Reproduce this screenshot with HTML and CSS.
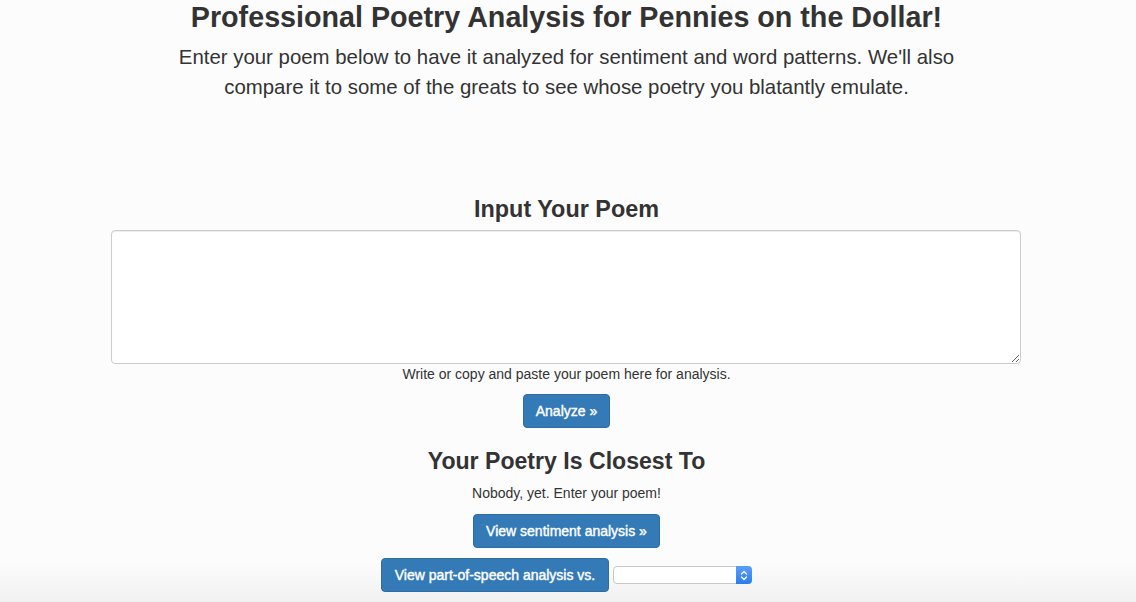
FILE: index.html
```html
<!DOCTYPE html>
<html>
<head>
<meta charset="utf-8">
<link rel="stylesheet" href="styles.css">
</head>
<body>
<div class="page">
  <header class="hero">
    <h1 class="title">Professional Poetry Analysis for Pennies on the Dollar!</h1>
    <p class="lead">Enter your poem below to have it analyzed for sentiment and word patterns. We'll also compare it to some of the greats to see whose poetry you blatantly emulate.</p>
  </header>
  <section class="input-section">
    <h2 class="heading">Input Your Poem</h2>
    <textarea class="poem"></textarea>
    <p class="help">Write or copy and paste your poem here for analysis.</p>
    <button class="btn">Analyze &raquo;</button>
  </section>
  <section class="result-section">
    <h2 class="heading heading-sm">Your Poetry Is Closest To</h2>
    <p class="help">Nobody, yet. Enter your poem!</p>
    <button class="btn">View sentiment analysis &raquo;</button>
    <div class="pos-row">
      <button class="btn btn-pos">View part-of-speech analysis vs.</button>
      <div class="select-wrap">
        <select class="poet"><option></option></select>
        <span class="select-arrow"><svg width="8" height="11" viewBox="0 0 8 11"><path d="M1.5 4 L4 1.5 L6.5 4 M1.5 7 L4 9.5 L6.5 7" fill="none" stroke="#fff" stroke-width="1.3" stroke-linecap="round" stroke-linejoin="round"/></svg></span>
      </div>
    </div>
  </section>
</div>
</body>
</html>
```
FILE: styles.css
```css
html {
  height: 100%;
  background: linear-gradient(to bottom, #fcfcfc 0, #fcfcfc calc(100% - 40px), #f1f1f1 100%);
}
body {
  margin: 0;
  font-family: "Liberation Sans", Arial, sans-serif;
  color: #333;
  font-size: 14px;
  line-height: 1.42857;
}
.page {
  display: flex;
  flex-direction: column;
  align-items: center;
  padding-right: 3px;
}
.hero {
  display: flex;
  flex-direction: column;
  align-items: center;
  width: 800px;
  text-align: center;
}
.title {
  margin: 0;
  font-size: 28.7px;
  font-weight: bold;
  line-height: 34px;
}
.lead {
  margin: 8px 0 0;
  font-size: 20.4px;
  line-height: 30px;
}
.input-section {
  margin-top: 92px;
  display: flex;
  flex-direction: column;
  align-items: center;
}
.heading {
  margin: 0;
  font-size: 23.4px;
  font-weight: bold;
  line-height: 30px;
}
.heading-sm {
  font-size: 23.1px;
}
.poem {
  margin: 6px 2px 0 0;
  width: 910px;
  height: 134px;
  box-sizing: border-box;
  border: 1px solid #ccc;
  border-radius: 4px;
  background: #fff;
  box-shadow: inset 0 1px 1px rgba(0,0,0,.075);
  padding: 6px 12px;
  font-family: inherit;
  display: block;
}
.help {
  margin: 0;
  line-height: 20px;
}
.btn {
  margin-top: 10px;
  height: 34px;
  padding: 0 12px;
  background: #337ab7;
  border: 1px solid #2e6da4;
  border-radius: 4px;
  color: #fff;
  font-family: inherit;
  font-size: 14px;
  font-weight: normal;
  -webkit-text-stroke: 0.4px #fff;
}
.btn-pos {
  padding: 0 13px;
}
.result-section {
  margin-top: 18px;
  display: flex;
  flex-direction: column;
  align-items: center;
}
.result-section .help {
  margin-top: 7px;
}
.result-section .btn {
  margin-top: 11px;
}
.pos-row {
  display: flex;
  align-items: center;
  gap: 4px;
}
.pos-row .btn {
  margin-top: 10px;
}
.select-wrap {
  position: relative;
  margin-top: 10px;
  width: 139px;
  height: 18px;
}
.poet {
  appearance: none;
  -webkit-appearance: none;
  width: 100%;
  height: 100%;
  box-sizing: border-box;
  border: 1px solid #c8c8c8;
  border-radius: 4px;
  background: #fff;
  margin: 0;
  display: block;
}
.select-arrow {
  position: absolute;
  right: 0;
  top: 0;
  width: 16px;
  height: 18px;
  border-radius: 0 4px 4px 0;
  background: linear-gradient(#5aa0f7, #2c7cf0);
  display: flex;
  align-items: center;
  justify-content: center;
}
```
